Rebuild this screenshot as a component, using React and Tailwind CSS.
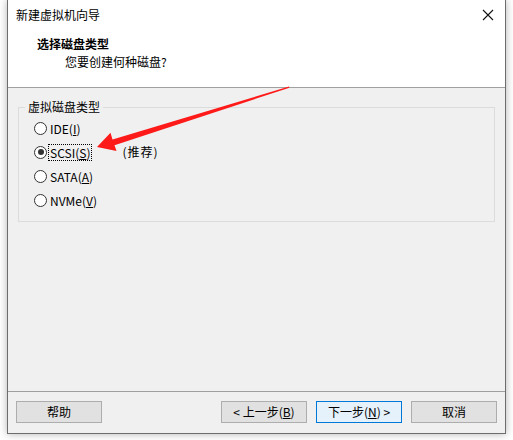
import React from "react";

const font = { fontFamily: '"Noto Sans CJK SC", "Microsoft YaHei", sans-serif' };

function Radio({ label, u, checked, focus, after }) {
  const idx = label.indexOf("(");
  const pre = label.slice(0, idx);
  return (
    <div className="flex items-center h-[24px]">
      <div className="w-[13px] h-[13px] rounded-full border border-[#333] bg-white flex items-center justify-center">
        {checked && <div className="w-[6px] h-[6px] rounded-full bg-[#333]" />}
      </div>
      <span
        className={
          "ml-[2px] text-[12px] leading-[15px] text-black px-[1px] " +
          (focus ? "outline outline-1 outline-dotted outline-[#000]" : "")
        }
      >
        {pre}(<span className="underline">{u}</span>)
      </span>
      {after}
    </div>
  );
}

export default function App() {
  return (
    <div className="w-[513px] h-[440px] bg-white relative overflow-hidden" style={font}>
      <div className="absolute left-[7px] top-0 w-[499px] h-[434px] border-x border-b border-[#6d6d6d] shadow-[0_0_8px_rgba(0,0,0,0.3)] flex flex-col bg-[#f0f0f0]">
        <div className="bg-white h-[88px] border-b border-[#a0a0a0] flex flex-col shrink-0">
          <div className="h-[30px] flex items-center justify-between pl-[8px] pr-[8px]">
            <span className="text-[12px] text-black">新建虚拟机向导</span>
            <svg width="12" height="12" viewBox="0 0 12 12" className="mr-[3px]">
              <path d="M1 1L11 11M11 1L1 11" stroke="#111" strokeWidth="1.1" />
            </svg>
          </div>
          <div className="pl-[29px] mt-[5px] text-[12px] font-bold leading-[18px] text-black">选择磁盘类型</div>
          <div className="pl-[57px] text-[12px] leading-[18px] text-black">您要创建何种磁盘?</div>
        </div>
        <div className="flex-1 flex flex-col">
          <div className="relative mx-[10px] mt-[19px] h-[115px] border border-[#dcdcdc]">
            <span className="absolute left-[6px] -top-[9px] bg-[#f0f0f0] px-[3px] text-[12px] leading-[16px] text-black">
              虚拟磁盘类型
            </span>
            <div className="pl-[15px] pt-[8px] flex flex-col">
              <Radio label="IDE(I)" u="I" />
              <Radio
                label="SCSI(S)"
                u="S"
                checked
                focus
                after={<span className="ml-[31px] text-[12px] tracking-[1px] text-black">(推荐)</span>}
              />
              <Radio label="SATA(A)" u="A" />
              <Radio label="NVMe(V)" u="V" />
            </div>
          </div>
          <div className="flex-1" />
          <div className="h-[42px] border-t border-[#a0a0a0] flex items-start pt-[9px] px-[8px] shrink-0">
            <button className="w-[86px] h-[22px] border border-[#adadad] bg-[#e1e1e1] text-[12px] text-black">帮助</button>
            <div className="flex-1" />
            <button className="w-[86px] h-[22px] border border-[#adadad] bg-[#e1e1e1] text-[12px] text-black">
              &lt; 上一步(<span className="underline">B</span>)
            </button>
            <button className="ml-[9px] w-[86px] h-[22px] border border-[#0078d7] bg-[#e5f1fb] text-[12px] text-black">
              下一步(<span className="underline">N</span>) &gt;
            </button>
            <button className="ml-[9px] w-[86px] h-[22px] border border-[#adadad] bg-[#e1e1e1] text-[12px] text-black">取消</button>
          </div>
        </div>
      </div>
      <svg className="absolute left-0 top-0 pointer-events-none" width="513" height="440">
        <polygon
          points="289,86.5 289.4,87.7 114.5,145.2 116.5,151 97,147 110.5,132.8 112.5,139.6"
          fill="#ff1a1a"
        />
      </svg>
    </div>
  );
}
